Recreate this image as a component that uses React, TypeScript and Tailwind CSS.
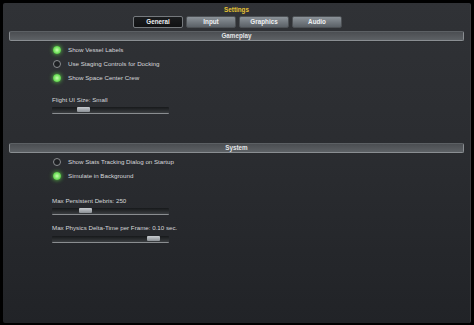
import React from "react";

const font = { fontFamily: '"Liberation Sans", Arial, sans-serif' };

const tabs = ["General", "Input", "Graphics", "Audio"];

const SectionBar = ({ title }: { title: string }) => (
  <div className="mx-[6px] h-[10px] rounded-[2px] border border-[#8a8e92] border-t-[#5c6064] bg-gradient-to-b from-[#4b4e52] to-[#5d6165] flex items-center justify-center shadow-[0_1px_0_#2a2c2f]">
    <span className="text-[6.3px] leading-none font-bold text-[#e4e6e8]">{title}</span>
  </div>
);

const Toggle = ({ on, label }: { on: boolean; label: string }) => (
  <div className="flex items-center h-[14px] pl-[50px]">
    {on ? (
      <div className="w-[8px] h-[8px] rounded-full bg-[radial-gradient(circle,#c8ffb0_0%,#6fe05a_55%,#3a9a30_100%)] shadow-[0_0_4px_#5fd04a]" />
    ) : (
      <div className="w-[8px] h-[8px] rounded-full border-[1.5px] border-[#8a8d90] bg-[#1e2023]" />
    )}
    <span className="ml-[7px] text-[6.2px] leading-none text-[#d6d8da]">{label}</span>
  </div>
);

const Slider = ({ label, pos }: { label: string; pos: number }) => (
  <div className="pl-[49px]">
    <div className="text-[6.2px] leading-none text-[#d6d8da]">{label}</div>
    <div className="relative mt-[4px] w-[117px] h-[7px] rounded-[1px] bg-gradient-to-b from-[#17191b] to-[#3a3d40] border-b border-[#8a8d90]">
      <div
        className="absolute top-[0px] w-[13px] h-[5px] rounded-[1px] bg-gradient-to-b from-[#c8ccd0] to-[#8b9095]"
        style={{ left: pos }}
      />
    </div>
  </div>
);

export default function App() {
  return (
    <div className="w-[474px] h-[325px] bg-black pt-[3px] pl-[3px] pr-[3px] pb-[2px]" style={font}>
      <div className="h-full rounded-[2px] bg-gradient-to-b from-[#303236] via-[#2a2c30] to-[#212327] border-r border-[#3a3c40]">
        <div className="pt-[2px] text-center text-[6.3px] leading-[10px] font-bold text-[#e6c434]">Settings</div>
        <div className="mt-[1px] flex justify-center gap-[3px] pl-[2px]">
          {tabs.map((t) => (
            <div
              key={t}
              className={
                t === "General"
                  ? "w-[50px] h-[12px] rounded-[2px] border border-[#75797d] bg-gradient-to-b from-[#1b1d1f] to-[#101113] flex items-center justify-center"
                  : "w-[50px] h-[12px] rounded-[2px] border border-[#4c5054] bg-gradient-to-b from-[#8c9399] to-[#5b6167] flex items-center justify-center"
              }
            >
              <span className="text-[6.3px] leading-none font-bold text-[#eef0f2]">{t}</span>
            </div>
          ))}
        </div>
        <div className="mt-[3px]">
          <SectionBar title="Gameplay" />
        </div>
        <div className="mt-[2px]">
          <Toggle on label="Show Vessel Labels" />
          <Toggle on={false} label="Use Staging Controls for Docking" />
          <Toggle on label="Show Space Center Crew" />
        </div>
        <div className="mt-[12px]">
          <Slider label="Flight UI Size: Small" pos={25} />
        </div>
        <div className="mt-[29px]">
          <SectionBar title="System" />
        </div>
        <div className="mt-[2px]">
          <Toggle on={false} label="Show Stats Tracking Dialog on Startup" />
          <Toggle on label="Simulate in Background" />
        </div>
        <div className="mt-[15px]">
          <Slider label="Max Persistent Debris: 250" pos={27} />
        </div>
        <div className="mt-[10px]">
          <Slider label="Max Physics Delta-Time per Frame: 0.10 sec." pos={95} />
        </div>
      </div>
    </div>
  );
}
